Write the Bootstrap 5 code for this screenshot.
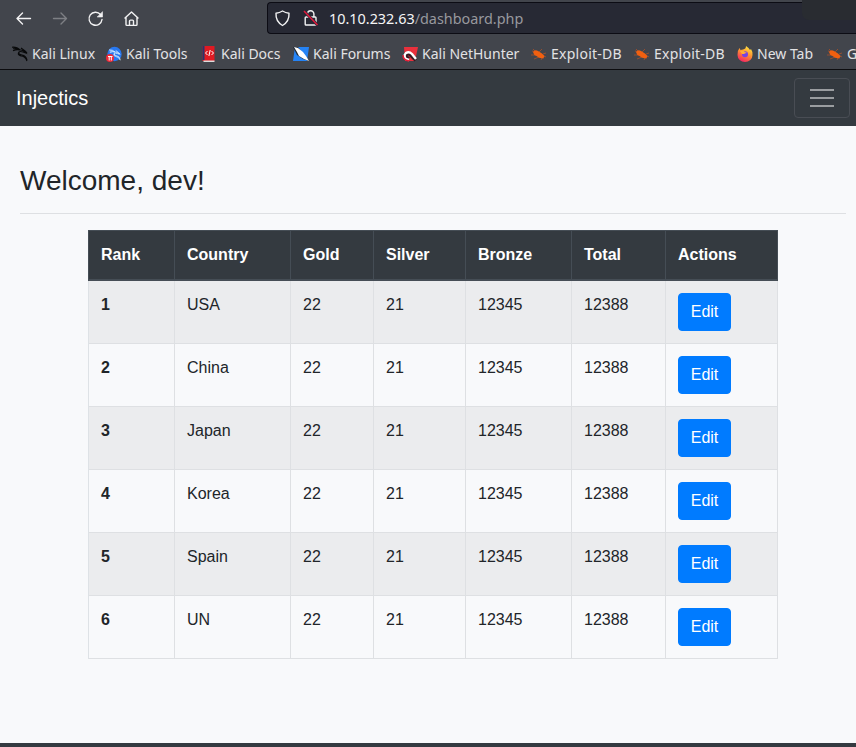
<!DOCTYPE html>
<html lang="en">
<head>
<meta charset="utf-8">
<meta name="viewport" content="width=device-width, initial-scale=1">
<title>Injectics</title>
<link href="https://cdn.jsdelivr.net/npm/bootstrap@5.3.0/dist/css/bootstrap.min.css" rel="stylesheet">
<style>
body{font-family:"Liberation Sans",Arial,sans-serif;background:#f8f9fb;color:#212529;width:856px;height:747px}
.chrome{background:#42454c;height:70px;border-bottom:1px solid #0c0c0f;font-family:"Noto Sans",sans-serif;color:#e6e6e8}
.tools{height:36px;padding-left:14px}
.tools>svg{margin-right:18px;flex-shrink:0}
.address{width:589px;height:32px;margin-left:auto;background:#272934;border:1px solid #0c0c14;border-right:0;border-radius:4px 0 0 4px;padding-left:6px;font-size:14.4px;color:#98989e}
.address b{font-weight:400;color:#f5f5f6}
.address span{margin:1px 0 0 10px}
.corner{right:0;top:0;width:54px;height:20px;background:#292c31;border-bottom-left-radius:7px}
.marks{display:grid;grid-template-columns:94px 95px 92px 109px 129px 103px 103px 90px 32px;padding-left:12px;margin-top:2px;height:31px;font-size:14px;line-height:32px;white-space:nowrap}
.marks a{color:#e2e2e4}
.marks .edb{letter-spacing:.25px}
.site-nav{height:56px;background:#343a40;padding:8px 6px 8px 16px}
.site-nav .navbar-brand{font-size:20px;line-height:30px}
.site-nav .navbar-toggler{width:56px;height:40px;padding:4px 12px;border-color:#494d54;border-radius:4px}
.welcome{font-size:28px;line-height:34px;padding-top:38px;height:88px;border-bottom:1px solid #dee0e3;margin:0 10px 0 20px}
.medals{width:690px;margin:16px 0 0 88px;table-layout:fixed;border-color:#dee2e6;border-collapse:separate;border-spacing:0;border-left:1px solid #dee2e6}
.medals>:not(caption)>*>*{padding:12px;background:transparent;box-shadow:none;color:#212529;border-width:0 1px 1px 0;border-color:#dee0e3}
.medals>:not(caption)>*{border-width:0}
.medals thead tr>th{background:#343a40;color:#fff;border-color:#454d55;border-style:solid;border-width:1px 1px 2px 0;height:51px}
.medals thead tr>th:first-child{box-shadow:-1px 0 #454d55}
.medals tbody tr>*{height:63px}
.medals tbody tr:nth-child(odd)>*{background:#ebecee}
.medals .btn{width:53px;height:38px;padding:0;line-height:36px;background:#007bff;border-color:#007bff;border-radius:4px;font-size:16px}
.foot{height:4px;background:#343a40}
</style>
</head>
<body class="d-flex flex-column overflow-hidden">
<svg width="0" height="0" class="position-absolute">
<symbol id="bug" viewBox="0 0 16 16"><path d="M1 5l5 1M0 9l6 0M3 13l5-2M10 14l1-2M12 13l0-3M12 8l3-1M8 6l3-3M13 10l2 1M2 3l3 3" stroke="#a8512b" stroke-width=".8" fill="none"/><path d="M2 6Q4 3 7 5L11 7.500 13.500 10 12.500 12Q9 13 5.500 10Q2.500 9 2 6z" fill="#f26010"/></symbol>
<symbol id="dragon" viewBox="0 0 16 16"><path d="M0 1.200Q5 .8 8 4Q4 2.200 1 2.700M1 4.700Q5 3 8 4Q11 3.500 14 7L11 6Q8 5 7 6Q6 8.500 10 9Q14 9.500 15 14M7 6Q5 9 9 10Q13 10 15 15M9 2l4 3 2 2" fill="none" stroke="currentColor" stroke-width="1.100"/></symbol>
</svg>
<div class="chrome position-relative flex-shrink-0">
<div class="tools d-flex align-items-center">
<svg width="18" height="18" viewBox="0 0 18 18" fill="none" stroke="#f2f2f3" stroke-width="1.400" stroke-linecap="round" stroke-linejoin="round"><path d="M3 9.500H16.500M8.500 4L3 9.500l5.500 5.500"/></svg>
<svg width="18" height="18" viewBox="0 0 18 18" fill="none" stroke="#7d7f84" stroke-width="1.400" stroke-linecap="round" stroke-linejoin="round"><path d="M3.500 9.500H16.500M11 4l5.500 5.500-5.500 5.500"/></svg>
<svg width="18" height="18" viewBox="0 0 18 18" fill="none" stroke="#f2f2f3" stroke-width="1.400" stroke-linecap="round"><path d="M14.500 5.500A6.500 6.500 0 1 0 16 10.500"/><path d="M16.500 3v5h-5z" fill="#f2f2f3" stroke-width=".6"/></svg>
<svg width="18" height="18" viewBox="0 0 18 18" fill="none" stroke="#f2f2f3" stroke-width="1.400" stroke-linejoin="round" stroke-linecap="round"><g transform="translate(.5 .6)"><path d="M2.500 8.500L9 2.500l6.500 6M3.500 7.800V15q0 .8.800.8h9.400q.8 0 .8-.8V7.800M7 15.500v-4q0-1 1-1h2q1 0 1 1v4"/></g></svg>
<div class="address d-flex align-items-center">
<svg class="me-2" width="17" height="18" viewBox="0 0 17 18" fill="none" stroke="#f2f2f3" stroke-width="1.400" stroke-linejoin="round"><path d="M8.500 2Q11.500 3.800 15 4.300Q15.500 12.500 8.500 16.500Q1.500 12.500 2 4.300Q5.500 3.800 8.500 2z"/></svg>
<svg width="20" height="18" viewBox="0 0 20 18" fill="none" stroke="#f2f2f3" stroke-width="1.400"><path d="M8.500 8V5a3.200 3.200 0 0 1 6.400 0V8M7 8h9.200q.8 0 .8.800v6.400q0 .8-.8.800H7q-.8 0-.8-.8V8.800Q6.200 8 7 8z"/><path d="M5 2L18.500 16" stroke="#272934" stroke-width="3"/><path d="M5 2L18.500 16" stroke="#e2183c" stroke-width="1.500"/></svg>
<span><b>10.10.232.63</b>/dashboard.php</span>
</div>
</div>
<div class="corner position-absolute"></div>
<div class="marks overflow-hidden">
<a class="d-flex align-items-center gap-1 text-decoration-none"><svg width="16" height="16" color="#08090a"><use href="#dragon"/></svg>Kali Linux</a>
<a class="d-flex align-items-center gap-1 text-decoration-none"><svg width="16" height="16" viewBox="0 0 16 16" color="#d7ebff"><circle cx="8.500" cy="8" r="7.200" fill="#2878f0"/><use href="#dragon" x="3" y="3" width="12" height="12"/><circle cx="4" cy="12" r="4" fill="#ee2938"/><path d="M2 10.500h4.500M3.200 10.500v4M5.300 10.500v4" stroke="#fff"/></svg>Kali Tools</a>
<a class="d-flex align-items-center gap-1 text-decoration-none"><svg width="16" height="16" viewBox="0 0 16 16"><path d="M1.500 0h12v15h-12z" fill="#e01a22"/><path d="M1.500 0h2v14h-2z" fill="#29366b"/><path d="M2.500 14.500h11V16h-11z" fill="#ddd"/><path d="M6.500 5L4.500 7l2 2M10.500 5l2 2-2 2M9.200 4l-1.300 6" fill="none" stroke="#fff"/></svg>Kali Docs</a>
<a class="d-flex align-items-center gap-1 text-decoration-none"><svg width="16" height="16" viewBox="0 0 16 16"><path d="M2 1h14l-2 14H0z" fill="#2583f5"/><path d="M0 1l5 0 4 5 7 9-6-2-6-4z" fill="#222a35"/><path d="M1 1l4 1 5 4 3 4 3 5-5-2-5-3-2-4z" fill="#fff"/></svg>Kali Forums</a>
<a class="d-flex align-items-center gap-1 text-decoration-none"><svg width="16" height="16" viewBox="0 0 16 16"><path d="M2 1h14l-3 14H3z" fill="#e9303c"/><path d="M14 14L9 9Q6 6 4 9Q3 11 7 13" fill="none" stroke="#351a22" stroke-width="4"/><path d="M14 13L10 8Q7 5 4 7Q1 10 4 13l3 1" fill="none" stroke="#fff" stroke-width="2.400"/><path d="M1 9q0 5 6 6" fill="none" stroke="#e21f38" stroke-width="1.500"/></svg>Kali NetHunter</a>
<a class="edb d-flex align-items-center gap-1 text-decoration-none"><svg width="16" height="16"><use href="#bug"/></svg>Exploit-DB</a>
<a class="edb d-flex align-items-center gap-1 text-decoration-none"><svg width="16" height="16"><use href="#bug"/></svg>Exploit-DB</a>
<a class="d-flex align-items-center gap-1 text-decoration-none"><svg width="16" height="16" viewBox="0 0 16 16"><defs><linearGradient id="fire" x1=".8" y1="0" x2=".3" y2="1"><stop stop-color="#fff044"/><stop offset=".45" stop-color="#ff9530"/><stop offset="1" stop-color="#f52164"/></linearGradient></defs><path d="M9 0Q12 2 13 4l1-1q2 3 1.500 6A7.500 7 0 0 1 .5 9Q0 5 2.500 2l1 2L6 3.500Q9 3 9 0z" fill="url(#fire)"/><circle cx="8" cy="8.300" r="3" fill="#7542e5"/><path d="M3 5q3-1 5 1l2 1q-2 0-3 1l-2 0z" fill="#ffae35"/></svg>New Tab</a>
<a class="d-flex align-items-center gap-1 text-decoration-none"><svg class="flex-shrink-0" width="16" height="16"><use href="#bug"/></svg>G</a>
</div>
</div>
<nav class="navbar navbar-dark site-nav flex-shrink-0 flex-nowrap">
<a class="navbar-brand m-0 p-0 text-white">Injectics</a>
<button class="navbar-toggler d-flex align-items-center justify-content-center" type="button" aria-label="Menu"><svg width="24" height="20" viewBox="0 0 24 20" stroke="#9a9da0" stroke-width="2"><path d="M0 2h24M0 10h24M0 18h24"/></svg></button>
</nav>
<main class="flex-grow-1">
<h3 class="welcome fw-normal mb-0">Welcome, dev!</h3>
<table class="table medals mb-0">
<colgroup><col style="width:86px"><col style="width:116px"><col style="width:83px"><col style="width:92px"><col style="width:106px"><col style="width:94px"><col style="width:112px"></colgroup>
<thead><tr><th>Rank</th><th>Country</th><th>Gold</th><th>Silver</th><th>Bronze</th><th>Total</th><th>Actions</th></tr></thead>
<tbody>
<tr><th>1</th><td>USA</td><td>22</td><td>21</td><td>12345</td><td>12388</td><td><button class="btn btn-primary">Edit</button></td></tr>
<tr><th>2</th><td>China</td><td>22</td><td>21</td><td>12345</td><td>12388</td><td><button class="btn btn-primary">Edit</button></td></tr>
<tr><th>3</th><td>Japan</td><td>22</td><td>21</td><td>12345</td><td>12388</td><td><button class="btn btn-primary">Edit</button></td></tr>
<tr><th>4</th><td>Korea</td><td>22</td><td>21</td><td>12345</td><td>12388</td><td><button class="btn btn-primary">Edit</button></td></tr>
<tr><th>5</th><td>Spain</td><td>22</td><td>21</td><td>12345</td><td>12388</td><td><button class="btn btn-primary">Edit</button></td></tr>
<tr><th>6</th><td>UN</td><td>22</td><td>21</td><td>12345</td><td>12388</td><td><button class="btn btn-primary">Edit</button></td></tr>
</tbody>
</table>
</main>
<footer class="foot flex-shrink-0"></footer>
<script src="https://cdn.jsdelivr.net/npm/bootstrap@5.3.0/dist/js/bootstrap.bundle.min.js"></script>
</body>
</html>
